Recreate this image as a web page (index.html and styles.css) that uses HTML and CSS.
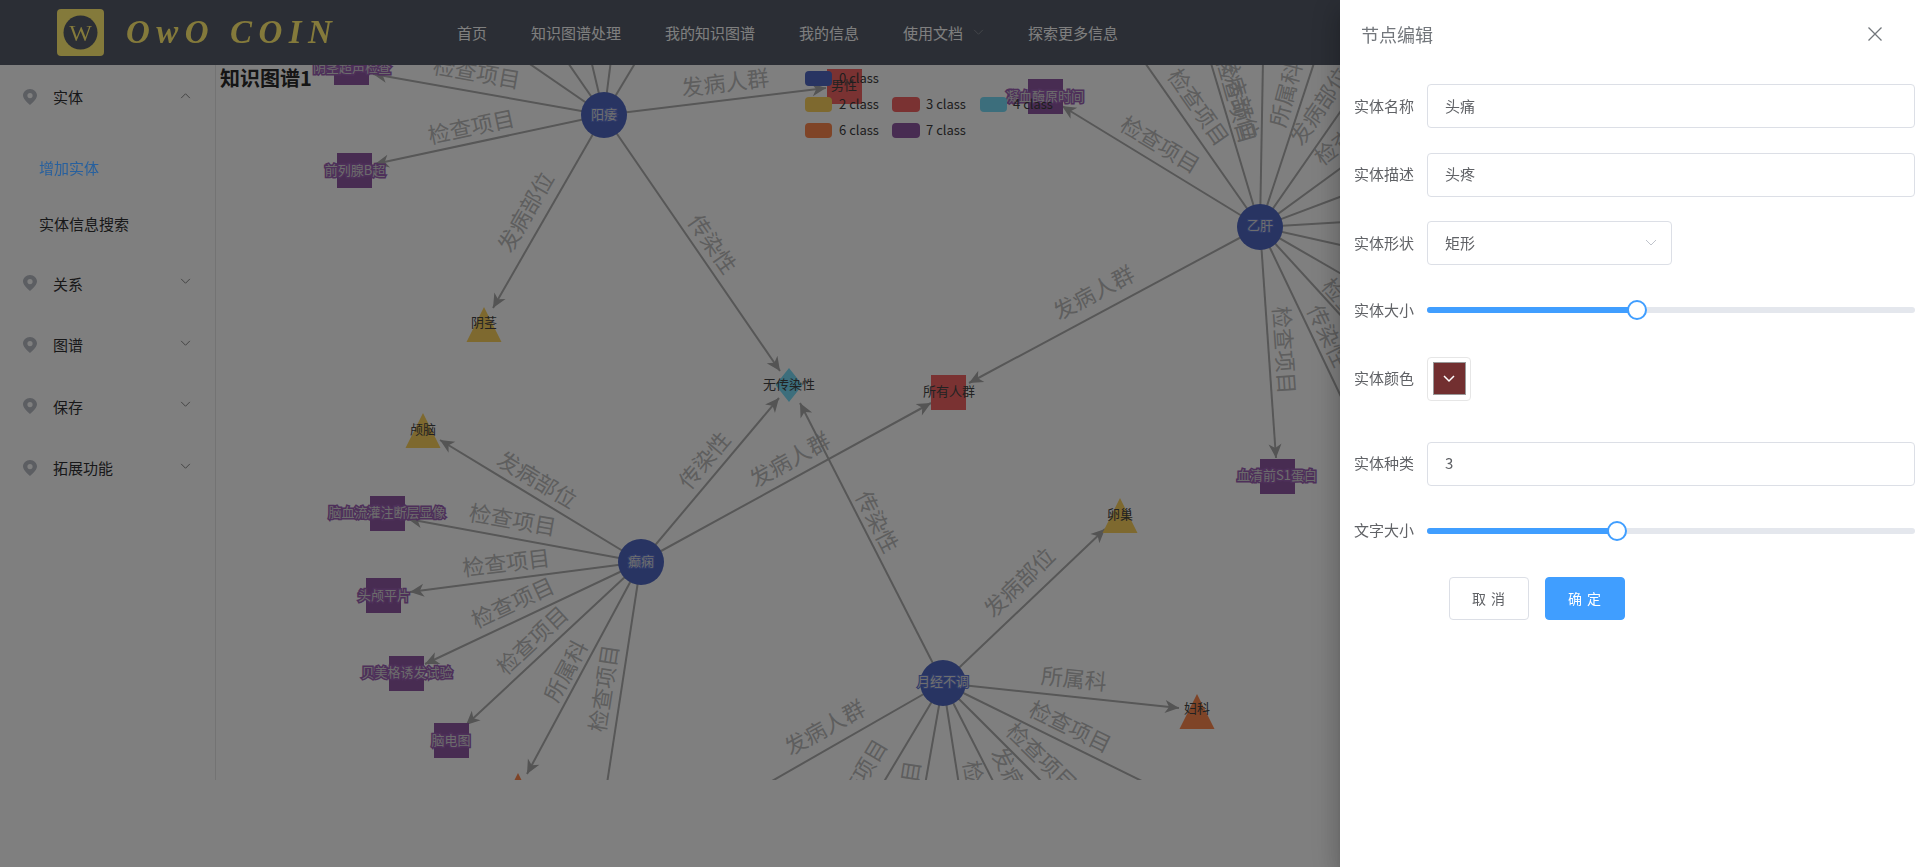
FILE: index.html
```html
<!DOCTYPE html>
<html lang="zh-CN">
<head>
  <meta charset="UTF-8" />
  <title>知识图谱</title>
  <link rel="stylesheet" href="styles.css">
</head>
<body>

<svg class="defs" width="0" height="0">
  <defs>
    <marker id="arrow" viewBox="-15 -8 16 16" refX="0" refY="0" markerWidth="16" markerHeight="16" markerUnits="userSpaceOnUse" orient="auto">
      <path d="M0 0L-14-6.5-10 0-14 6.5z" fill="#a8a8a8"/>
    </marker>
    <path id="pin" fill-rule="evenodd" d="M7 0C3 0 0 3 0 6.6 0 10.6 7 16 7 16s7-5.400 7-9.400C14 3 11 0 7 0zm0 4a2.600 2.600 0 1 1 0 5.200A2.600 2.600 0 0 1 7 4z"/>
  </defs>
</svg>

<header class="topbar">
  <a class="logo">
    <svg class="logo-mark" viewBox="0 0 47 47" width="47" height="47">
      <rect width="47" height="47" rx="4" fill="#847a3b"/>
      <circle cx="23.500" cy="23.500" r="17" fill="#2b2e35"/>
      <text x="23.500" y="32" text-anchor="middle" class="logo-w">W</text>
    </svg>
    <span class="logo-text">OwO COIN</span>
  </a>
  <nav class="topnav">
    <a>首页</a>
    <a>知识图谱处理</a>
    <a>我的知识图谱</a>
    <a>我的信息</a>
    <a>使用文档<svg class="chevron nav-chevron" viewBox="0 0 12 8"><path d="M1 1l5 5 5-5"/></svg></a>
    <a>探索更多信息</a>
  </nav>
</header>

<div class="layout">
  <aside class="sidebar">
    <div class="menu-title">
      <svg class="pin" viewBox="0 0 14 16"><use href="#pin"/></svg>实体
      <svg class="chevron menu-chevron" viewBox="0 0 12 8"><path d="M1 7l5-5 5 5"/></svg>
    </div>
    <ul class="submenu">
      <li class="active">增加实体</li>
      <li>实体信息搜索</li>
    </ul>
    <div class="menu-title">
      <svg class="pin" viewBox="0 0 14 16"><use href="#pin"/></svg>关系
      <svg class="chevron menu-chevron" viewBox="0 0 12 8"><path d="M1 1l5 5 5-5"/></svg>
    </div>
    <div class="menu-title">
      <svg class="pin" viewBox="0 0 14 16"><use href="#pin"/></svg>图谱
      <svg class="chevron menu-chevron" viewBox="0 0 12 8"><path d="M1 1l5 5 5-5"/></svg>
    </div>
    <div class="menu-title">
      <svg class="pin" viewBox="0 0 14 16"><use href="#pin"/></svg>保存
      <svg class="chevron menu-chevron" viewBox="0 0 12 8"><path d="M1 1l5 5 5-5"/></svg>
    </div>
    <div class="menu-title">
      <svg class="pin" viewBox="0 0 14 16"><use href="#pin"/></svg>拓展功能
      <svg class="chevron menu-chevron" viewBox="0 0 12 8"><path d="M1 1l5 5 5-5"/></svg>
    </div>
  </aside>

  <main class="graph-panel">
    <svg class="graph" viewBox="216 65 1699 715" width="1699" height="715">
      <!-- 阳痿 -->
      <g class="edges">
        <line x1="604" y1="115" x2="373" y2="74" marker-end="url(#arrow)"/>
        <line x1="604" y1="115" x2="375" y2="164" marker-end="url(#arrow)"/>
        <line x1="604" y1="115" x2="493" y2="308" marker-end="url(#arrow)"/>
        <line x1="604" y1="115" x2="780" y2="371" marker-end="url(#arrow)"/>
        <line x1="604" y1="115" x2="826" y2="88" marker-end="url(#arrow)"/>
        <line x1="604" y1="115" x2="524" y2="60"/>
        <line x1="604" y1="115" x2="566" y2="60"/>
        <line x1="604" y1="115" x2="591" y2="60"/>
        <line x1="604" y1="115" x2="611" y2="60"/>
        <line x1="604" y1="115" x2="637" y2="60"/>
      </g>
      <text class="edge-label" transform="translate(477 73) rotate(10)">检查项目</text>
      <text class="edge-label" transform="translate(471 127) rotate(-12)">检查项目</text>
      <text class="edge-label" transform="translate(524 213) rotate(-60)">发病部位</text>
      <text class="edge-label" transform="translate(714 245) rotate(55)">传染性</text>
      <text class="edge-label" transform="translate(725 83) rotate(-7)">发病人群</text>

      <!-- 癫痫 -->
      <g class="edges">
        <line x1="641" y1="562" x2="440" y2="440" marker-end="url(#arrow)"/>
        <line x1="641" y1="562" x2="408" y2="519" marker-end="url(#arrow)"/>
        <line x1="641" y1="562" x2="410" y2="592" marker-end="url(#arrow)"/>
        <line x1="641" y1="562" x2="425" y2="664" marker-end="url(#arrow)"/>
        <line x1="641" y1="562" x2="466" y2="725" marker-end="url(#arrow)"/>
        <line x1="641" y1="562" x2="527" y2="774" marker-end="url(#arrow)"/>
        <line x1="641" y1="562" x2="606" y2="790"/>
        <line x1="641" y1="562" x2="779" y2="398" marker-end="url(#arrow)"/>
        <line x1="641" y1="562" x2="931" y2="403" marker-end="url(#arrow)"/>
      </g>
      <text class="edge-label" transform="translate(538 480) rotate(31)">发病部位</text>
      <text class="edge-label" transform="translate(513 520) rotate(10)">检查项目</text>
      <text class="edge-label" transform="translate(506 563) rotate(-7)">检查项目</text>
      <text class="edge-label" transform="translate(512 603) rotate(-25)">检查项目</text>
      <text class="edge-label" transform="translate(531 641) rotate(-43)">检查项目</text>
      <text class="edge-label" transform="translate(564 672) rotate(-62)">所属科</text>
      <text class="edge-label" transform="translate(602 690) rotate(-81)">检查项目</text>
      <text class="edge-label" transform="translate(703 461) rotate(-50)">传染性</text>
      <text class="edge-label" transform="translate(789 460) rotate(-29)">发病人群</text>

      <!-- 月经不调 -->
      <g class="edges">
        <line x1="943" y1="683" x2="800" y2="403" marker-end="url(#arrow)"/>
        <line x1="943" y1="683" x2="1105" y2="529" marker-end="url(#arrow)"/>
        <line x1="943" y1="683" x2="1179" y2="708" marker-end="url(#arrow)"/>
        <line x1="943" y1="683" x2="765" y2="785"/>
        <line x1="943" y1="683" x2="882" y2="785"/>
        <line x1="943" y1="683" x2="925" y2="785"/>
        <line x1="943" y1="683" x2="959" y2="785"/>
        <line x1="943" y1="683" x2="995" y2="785"/>
        <line x1="943" y1="683" x2="1045" y2="785"/>
        <line x1="943" y1="683" x2="1150" y2="785"/>
      </g>
      <text class="edge-label" transform="translate(879 523) rotate(63)">传染性</text>
      <text class="edge-label" transform="translate(1018 583) rotate(-44)">发病部位</text>
      <text class="edge-label" transform="translate(1074 679) rotate(6)">所属科</text>
      <text class="edge-label" transform="translate(824 728) rotate(-29)">发病人群</text>
      <text class="edge-label" transform="translate(1071 727) rotate(26)">检查项目</text>
      <text class="edge-label" transform="translate(1043 758) rotate(44)">检查项目</text>
      <text class="edge-label" transform="translate(1020 789) rotate(62)">发病部位</text>
      <text class="edge-label" transform="translate(980 806) rotate(81)">检查项目</text>
      <text class="edge-label" transform="translate(904 806) rotate(-81)">检查项目</text>
      <text class="edge-label" transform="translate(857 780) rotate(-59)">检查项目</text>

      <!-- 乙肝 -->
      <g class="edges">
        <line x1="1260" y1="227" x2="1062" y2="106" marker-end="url(#arrow)"/>
        <line x1="1260" y1="227" x2="969" y2="383" marker-end="url(#arrow)"/>
        <line x1="1260" y1="227" x2="1276" y2="458" marker-end="url(#arrow)"/>
        <line x1="1260" y1="227" x2="1143" y2="60"/>
        <line x1="1260" y1="227" x2="1210" y2="60"/>
        <line x1="1260" y1="227" x2="1263" y2="60"/>
        <line x1="1260" y1="227" x2="1315" y2="60"/>
        <line x1="1260" y1="227" x2="1345" y2="105"/>
        <line x1="1260" y1="227" x2="1345" y2="165"/>
        <line x1="1260" y1="227" x2="1345" y2="195"/>
        <line x1="1260" y1="227" x2="1345" y2="222"/>
        <line x1="1260" y1="227" x2="1345" y2="246"/>
        <line x1="1260" y1="227" x2="1345" y2="276"/>
        <line x1="1260" y1="227" x2="1345" y2="320"/>
        <line x1="1260" y1="227" x2="1345" y2="405"/>
      </g>
      <text class="edge-label" transform="translate(1161 145) rotate(31)">检查项目</text>
      <text class="edge-label" transform="translate(1093 293) rotate(-28)">发病人群</text>
      <text class="edge-label" transform="translate(1286 352) rotate(86)">检查项目</text>
      <text class="edge-label" transform="translate(1200 108) rotate(55)">检查项目</text>
      <text class="edge-label" transform="translate(1238 102) rotate(74)">检查项目</text>
      <text class="edge-label" transform="translate(1241 98) rotate(74)">发病部位</text>
      <text class="edge-label" transform="translate(1284 96) rotate(-75)">所属科</text>
      <text class="edge-label" transform="translate(1318 107) rotate(-56)">发病部位</text>
      <text class="edge-label" transform="translate(1351 134) rotate(-37)">检查项目</text>
      <text class="edge-label" transform="translate(1330 337) rotate(64)">传染性</text>
      <text class="edge-label" transform="translate(1357 315) rotate(48)">检查项目</text>

      <!-- 节点 -->
      <g class="node-blue">
        <circle cx="604" cy="115" r="23"/>
        <circle cx="1260" cy="227" r="23"/>
        <circle cx="641" cy="562" r="23"/>
        <circle cx="943" cy="683" r="23"/>
      </g>
      <g class="node-purple">
        <rect x="334" y="50" width="35" height="35"/>
        <rect x="337" y="153" width="35" height="35"/>
        <rect x="1028" y="79" width="35" height="35"/>
        <rect x="1260" y="459" width="35" height="35"/>
        <rect x="370" y="496" width="35" height="35"/>
        <rect x="366" y="578" width="35" height="35"/>
        <rect x="389" y="656" width="35" height="35"/>
        <rect x="434" y="723" width="35" height="35"/>
      </g>
      <g class="node-red">
        <rect x="827" y="69" width="35" height="35"/>
        <rect x="931" y="375" width="35" height="35"/>
      </g>
      <g class="node-gold">
        <polygon points="484,307 501.500,342 466.500,342"/>
        <polygon points="423,413 440.500,448 405.500,448"/>
        <polygon points="1120,498 1137.500,533 1102.500,533"/>
      </g>
      <g class="node-orange">
        <polygon points="1197,694 1214.500,729 1179.500,729"/>
        <polygon points="518,773 535.500,808 500.500,808"/>
      </g>
      <polygon class="node-cyan" points="789,368 802.500,385 789,402 775.500,385"/>

      <text class="label-blue" x="604" y="113">阳痿</text>
      <text class="label-blue" x="1260" y="224">乙肝</text>
      <text class="label-blue" x="641" y="560">癫痫</text>
      <text class="label-blue" x="943" y="680">月经不调</text>

      <text class="label-purple" x="352" y="66">阴茎超声检查</text>
      <text class="label-purple" x="355" y="169">前列腺B超</text>
      <text class="label-purple" x="1045" y="95">凝血酶原时间</text>
      <text class="label-purple" x="1277" y="474">血清前S1蛋白</text>
      <text class="label-purple" x="387" y="511">脑血流灌注断层显像</text>
      <text class="label-purple" x="384" y="594">头颅平片</text>
      <text class="label-purple" x="407" y="671">贝美格诱发试验</text>
      <text class="label-purple" x="451" y="739">脑电图</text>

      <text class="label-dark" x="844" y="84">男性</text>
      <text class="label-dark" x="949" y="390">所有人群</text>
      <text class="label-dark" x="484" y="321">阴茎</text>
      <text class="label-dark" x="423" y="428">颅脑</text>
      <text class="label-dark" x="1120" y="513">卵巢</text>
      <text class="label-dark" x="1197" y="707">妇科</text>
      <text class="label-dark" x="789" y="383">无传染性</text>

      <!-- legend -->
      <g class="legend">
        <rect class="node-blue" x="805" y="71" width="27" height="15" rx="4"/>
        <text x="839" y="77.500">0 class</text>
        <rect class="node-gold" x="805" y="97" width="27" height="15" rx="4"/>
        <text x="839" y="103.500">2 class</text>
        <rect class="node-red" x="892" y="97" width="28" height="15" rx="4"/>
        <text x="926" y="103.500">3 class</text>
        <rect class="node-cyan" x="980" y="97" width="27" height="15" rx="4"/>
        <text x="1013" y="103.500">4 class</text>
        <rect class="node-orange" x="805" y="123" width="27" height="15" rx="4"/>
        <text x="839" y="129.500">6 class</text>
        <rect class="node-purple" x="892" y="123" width="28" height="15" rx="4"/>
        <text x="926" y="129.500">7 class</text>
      </g>
    </svg>
    <h2 class="graph-title">知识图谱1</h2>
  </main>
</div>

<div class="overlay"></div>

<section class="drawer">
  <div class="drawer-head">
    <span class="drawer-title">节点编辑</span>
    <svg class="drawer-close" viewBox="0 0 14 14"><path d="M.5.500l13 13M13.500.500l-13 13"/></svg>
  </div>
  <form class="node-form">
    <div class="form-row">
      <label>实体名称</label>
      <input class="text-input" type="text" value="头痛">
    </div>
    <div class="form-row">
      <label>实体描述</label>
      <input class="text-input" type="text" value="头疼">
    </div>
    <div class="form-row">
      <label>实体形状</label>
      <div class="select-box">矩形<svg class="chevron select-chevron" viewBox="0 0 12 8"><path d="M1 1l5 5 5-5"/></svg></div>
    </div>
    <div class="form-row row-slider">
      <label>实体大小</label>
      <div class="slider"><div class="slider-fill" style="width: 43%"><span class="slider-thumb"></span></div></div>
    </div>
    <div class="form-row row-color">
      <label>实体颜色</label>
      <div class="color-box"><div class="color-swatch"><svg class="chevron swatch-chevron" viewBox="0 0 12 8"><path d="M1 1l5 5 5-5"/></svg></div></div>
    </div>
    <div class="form-row">
      <label>实体种类</label>
      <input class="text-input" type="text" value="3">
    </div>
    <div class="form-row row-slider">
      <label>文字大小</label>
      <div class="slider"><div class="slider-fill" style="width: 39%"><span class="slider-thumb"></span></div></div>
    </div>
    <div class="form-actions">
      <button type="button" class="btn">取 消</button>
      <button type="button" class="btn btn-primary">确 定</button>
    </div>
  </form>
</section>

</body>
</html>
```

FILE: styles.css
```css
* {
  box-sizing: border-box;
}
html, body {
  height: 100%;
  overflow: hidden;
}
body {
  margin: 0;
  background: #fff;
  color: #303133;
  font-family: "Noto Sans CJK SC", "Noto Sans", sans-serif;
  font-size: 15px;
}
.defs {
  position: absolute;
}

/* top bar */
.topbar {
  display: flex;
  align-items: center;
  height: 65px;
  background: #565c6a;
}
.logo {
  display: flex;
  align-items: center;
  gap: 22px;
  width: 435px;
  padding-left: 57px;
  position: relative;
  z-index: 3;
}
.logo-mark {
  flex: none;
}
.logo-w {
  font-family: "Liberation Serif", serif;
  font-size: 24px;
  fill: #847a3b;
}
.logo-text {
  font-family: "Liberation Serif", serif;
  font-size: 33px;
  font-weight: 700;
  font-style: italic;
  letter-spacing: 6.500px;
  color: #847a3b;
  white-space: nowrap;
}
.topnav {
  display: flex;
  height: 100%;
  align-items: center;
}
.topnav a {
  display: flex;
  align-items: center;
  padding: 0 22px;
  color: #fff;
  line-height: 63px;
}
.chevron {
  fill: none;
  stroke: currentColor;
  stroke-width: 1;
}
.nav-chevron {
  width: 11px;
  height: 7px;
  margin-left: 10px;
  color: #909399;
}

/* layout */
.layout {
  display: flex;
  height: 715px;
}
.sidebar {
  flex: none;
  width: 216px;
  padding-top: 1px;
  border-right: 1px solid #e6e6e6;
}
.menu-title {
  display: flex;
  align-items: center;
  height: 61.500px;
  padding-left: 23px;
  color: #303133;
}
.pin {
  width: 14px;
  height: 16px;
  margin-right: 16px;
  fill: #b8bcc4;
}
.menu-chevron {
  width: 11px;
  height: 7px;
  margin-left: auto;
  margin-right: 24px;
  margin-bottom: 3px;
  color: #777;
}
.submenu {
  list-style: none;
  margin: 0;
  padding: 12px 0 1px 39px;
}
.submenu li {
  height: 56px;
  line-height: 56px;
}
.submenu .active {
  position: relative;
  z-index: 3;
  color: #27609e;
}

/* graph */
.graph-panel {
  flex: 1;
  position: relative;
  overflow: hidden;
}
.graph {
  position: absolute;
  top: 0;
  left: 0;
  display: block;
}
.graph-title {
  position: relative;
  margin: 0;
  padding-left: 4px;
  font-size: 20px;
  line-height: 26px;
  font-weight: 700;
  color: #2a2a2a;
}
.edges line {
  stroke: #aeaeae;
  stroke-width: 2;
}
.edge-label {
  font-size: 22px;
  fill: #bcbcbc;
  text-anchor: middle;
  dominant-baseline: central;
  translate: 0 -2px;
}
.node-blue { fill: #5068c4; }
.node-purple { fill: #9058a4; }
.node-red { fill: #f46464; }
.node-gold { fill: #fdd25e; }
.node-orange { fill: #ff884e; }
.node-cyan { fill: #78dcf8; }

.label-blue,
.label-purple,
.label-dark {
  font-size: 13px;
  text-anchor: middle;
  dominant-baseline: central;
}
.label-blue {
  fill: #ddd;
  stroke: #6078d8;
  stroke-width: 2px;
  paint-order: stroke;
}
.label-purple {
  fill: #d8d8d8;
  stroke: #9c60b4;
  stroke-width: 3px;
  paint-order: stroke;
}
.label-dark {
  fill: #444;
}
.legend text {
  font-size: 13px;
  fill: #3c3c3c;
  dominant-baseline: central;
}

/* dim + drawer */
.overlay {
  position: fixed;
  inset: 0;
  z-index: 2;
  background: rgba(0, 0, 0, 0.5);
}
.drawer {
  position: fixed;
  top: 0;
  right: 0;
  bottom: 0;
  width: 575px;
  z-index: 4;
  background: #fff;
  box-shadow: 0 8px 10px -5px rgba(0,0,0,.2), 0 16px 24px 2px rgba(0,0,0,.14), 0 6px 30px 5px rgba(0,0,0,.12);
}
.drawer-head {
  display: flex;
  align-items: center;
  justify-content: space-between;
  height: 50px;
  padding: 20px 33px 0 21px;
}
.drawer-title {
  font-size: 18px;
  line-height: 28px;
  padding-bottom: 2px;
  color: #72767b;
}
.drawer-close {
  width: 14px;
  height: 14px;
  margin-bottom: 3px;
  fill: none;
  stroke: #72767b;
  stroke-width: 1.300;
}
.node-form {
  padding-top: 34px;
}
.form-row {
  display: flex;
  align-items: center;
  height: 44px;
  margin-bottom: 24.500px;
}
.row-slider {
  margin-top: -1.500px;
}
.row-color {
  margin-bottom: 41px;
}
.form-row label {
  flex: none;
  width: 87px;
  padding-right: 13px;
  padding-bottom: 2px;
  text-align: right;
  color: #606266;
}
.text-input,
.select-box {
  height: 44px;
  border: 1px solid #dcdfe6;
  border-radius: 4px;
  background: #fff;
  padding: 0 17px 2px;
  font: inherit;
  color: #606266;
}
.text-input {
  flex: 1;
  min-width: 0;
  outline: none;
}
.select-box {
  display: flex;
  align-items: center;
  justify-content: space-between;
  width: 245px;
  padding-right: 14px;
}
.select-chevron {
  width: 12px;
  height: 8px;
  margin-top: 2px;
  color: #c0c4cc;
}
.slider {
  flex: 1;
  height: 6px;
  border-radius: 3px;
  background: #e4e7ed;
}
.slider-fill {
  position: relative;
  height: 100%;
  border-radius: 3px;
  background: #409eff;
}
.slider-thumb {
  position: absolute;
  top: -7px;
  right: -10px;
  width: 20px;
  height: 20px;
  border: 2px solid #409eff;
  border-radius: 50%;
  background: #fff;
}
.color-box {
  display: flex;
  align-items: center;
  justify-content: center;
  width: 44px;
  height: 44px;
  border: 1px solid #e6e6e6;
  border-radius: 4px;
}
.color-swatch {
  display: flex;
  align-items: center;
  justify-content: center;
  width: 33px;
  height: 33px;
  border: 1px solid #999;
  background: #722f30;
}
.swatch-chevron {
  width: 12px;
  height: 8px;
  color: #fff;
  stroke-width: 1.500;
}
.form-actions {
  display: flex;
  gap: 16px;
  padding-left: 109px;
  margin-top: 4px;
}
.btn {
  width: 80px;
  height: 43px;
  padding: 0 0 2px;
  border: 1px solid #dcdfe6;
  border-radius: 4px;
  background: #fff;
  color: #606266;
  font: inherit;
  font-size: 14px;
  letter-spacing: 1px;
}
.btn-primary {
  border-color: #409eff;
  background: #409eff;
  color: #fff;
}
```
